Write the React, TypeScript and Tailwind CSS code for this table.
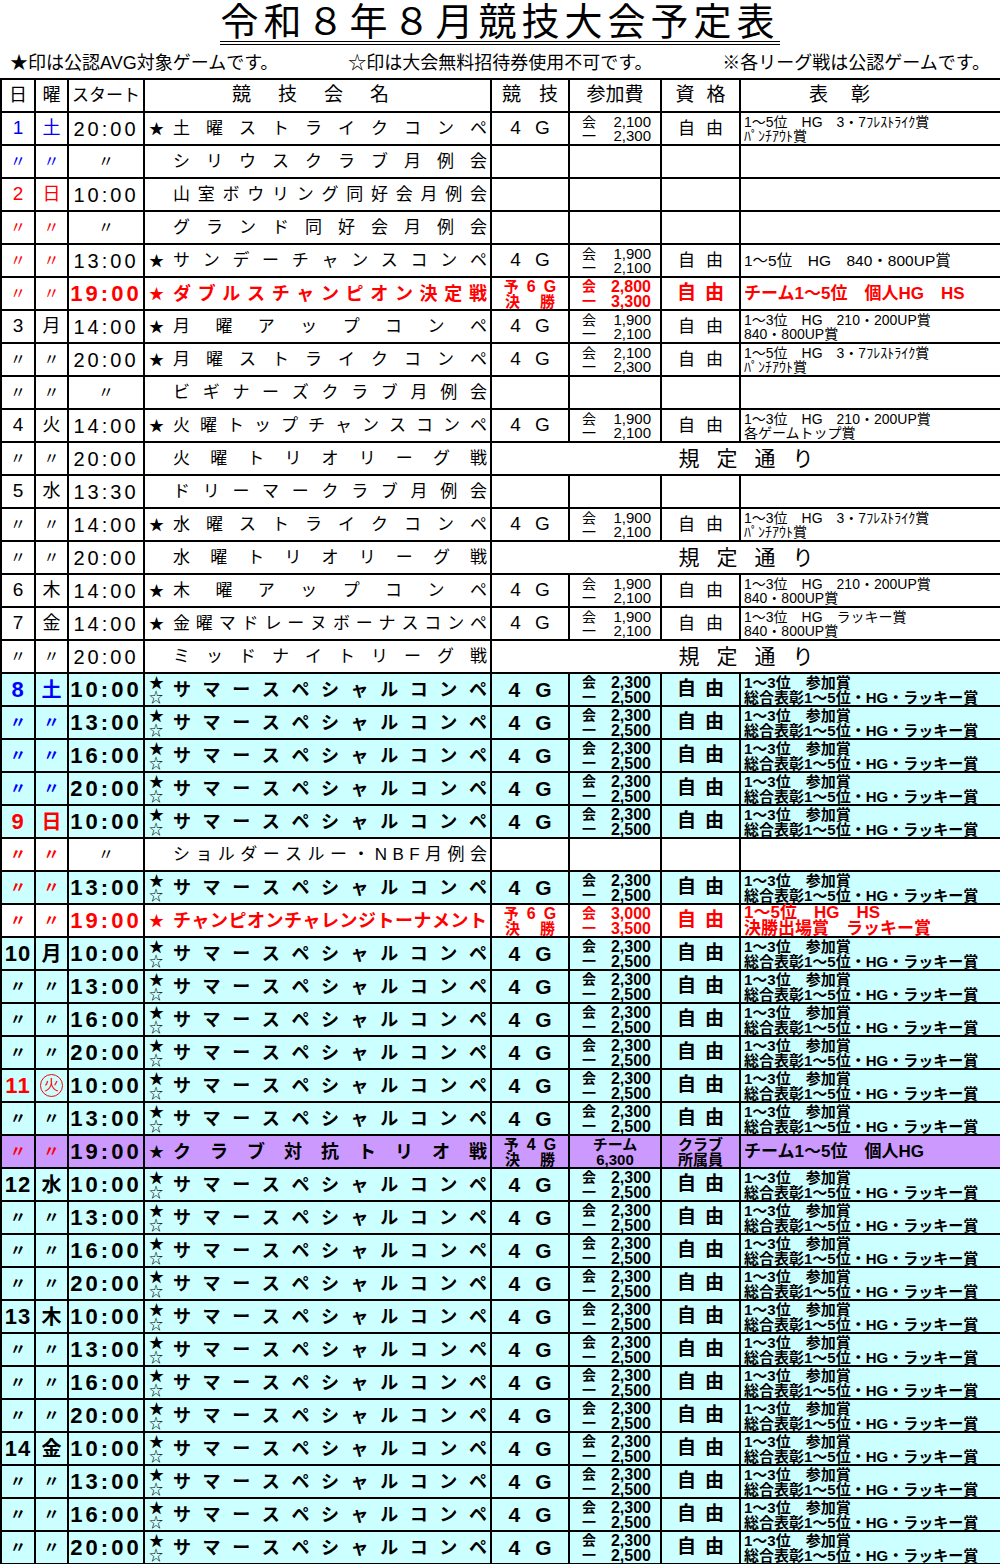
import React from 'react'

type Tone = 'k' | 'b' | 'r'
type Kind = 'plain' | 'summer' | 'double' | 'challenge' | 'club'

interface Row {
  day: string
  dow: string
  tone: Tone
  time: string
  name: string
  kind: Kind
  star?: boolean
  fee?: [string, string]
  award?: string[]
  rule?: boolean
  bold?: boolean
  holiday?: boolean
}

const D = '〃'
const RED = 'text-[#ff0000]'
const cell = 'border-2 border-black p-0 align-middle'

const toneText: Record<Tone, string> = {
  k: 'text-black',
  b: 'text-[#0000ff]',
  r: 'text-[#ff0000]',
}

const strike5 = ['1～5位　HG　3・7ﾌﾚｽﾄﾗｲｸ賞', 'ﾊﾟﾝﾁｱｳﾄ賞']
const strike3 = ['1～3位　HG　3・7ﾌﾚｽﾄﾗｲｸ賞', 'ﾊﾟﾝﾁｱｳﾄ賞']
const up3 = ['1～3位　HG　210・200UP賞', '840・800UP賞']

const sp = (day: string, dow: string, tone: Tone, time: string): Row => ({
  day, dow, tone, time, star: true, name: 'サマースペシャルコンペ', kind: 'summer', bold: true,
})

const rows: Row[] = [
  { day: '1', dow: '土', tone: 'b', time: '20:00', star: true, name: '土曜ストライクコンペ', kind: 'plain', fee: ['2,100', '2,300'], award: strike5 },
  { day: D, dow: D, tone: 'b', time: D, name: 'シリウスクラブ月例会', kind: 'plain' },
  { day: '2', dow: '日', tone: 'r', time: '10:00', name: '山室ボウリング同好会月例会', kind: 'plain' },
  { day: D, dow: D, tone: 'r', time: D, name: 'グランド同好会月例会', kind: 'plain' },
  { day: D, dow: D, tone: 'r', time: '13:00', star: true, name: 'サンデーチャンスコンペ', kind: 'plain', fee: ['1,900', '2,100'], award: ['1～5位　HG　840・800UP賞'] },
  { day: D, dow: D, tone: 'r', time: '19:00', star: true, name: 'ダブルスチャンピオン決定戦', kind: 'double' },
  { day: '3', dow: '月', tone: 'k', time: '14:00', star: true, name: '月曜アップコンペ', kind: 'plain', fee: ['1,900', '2,100'], award: up3 },
  { day: D, dow: D, tone: 'k', time: '20:00', star: true, name: '月曜ストライクコンペ', kind: 'plain', fee: ['2,100', '2,300'], award: strike5 },
  { day: D, dow: D, tone: 'k', time: D, name: 'ビギナーズクラブ月例会', kind: 'plain' },
  { day: '4', dow: '火', tone: 'k', time: '14:00', star: true, name: '火曜トップチャンスコンペ', kind: 'plain', fee: ['1,900', '2,100'], award: ['1～3位　HG　210・200UP賞', '各ゲームトップ賞'] },
  { day: D, dow: D, tone: 'k', time: '20:00', name: '火曜トリオリーグ戦', kind: 'plain', rule: true },
  { day: '5', dow: '水', tone: 'k', time: '13:30', name: 'ドリーマークラブ月例会', kind: 'plain' },
  { day: D, dow: D, tone: 'k', time: '14:00', star: true, name: '水曜ストライクコンペ', kind: 'plain', fee: ['1,900', '2,100'], award: strike3 },
  { day: D, dow: D, tone: 'k', time: '20:00', name: '水曜トリオリーグ戦', kind: 'plain', rule: true },
  { day: '6', dow: '木', tone: 'k', time: '14:00', star: true, name: '木曜アップコンペ', kind: 'plain', fee: ['1,900', '2,100'], award: up3 },
  { day: '7', dow: '金', tone: 'k', time: '14:00', star: true, name: '金曜マドレーヌボーナスコンペ', kind: 'plain', fee: ['1,900', '2,100'], award: ['1～3位　HG　ラッキー賞', '840・800UP賞'] },
  { day: D, dow: D, tone: 'k', time: '20:00', name: 'ミッドナイトリーグ戦', kind: 'plain', rule: true },
  sp('8', '土', 'b', '10:00'),
  sp(D, D, 'b', '13:00'),
  sp(D, D, 'b', '16:00'),
  sp(D, D, 'b', '20:00'),
  sp('9', '日', 'r', '10:00'),
  { day: D, dow: D, tone: 'r', time: D, name: 'ショルダースルー・NBF月例会', kind: 'plain', bold: true },
  sp(D, D, 'r', '13:00'),
  { day: D, dow: D, tone: 'r', time: '19:00', star: true, name: 'チャンピオンチャレンジトーナメント', kind: 'challenge', bold: true },
  sp('10', '月', 'k', '10:00'),
  sp(D, D, 'k', '13:00'),
  sp(D, D, 'k', '16:00'),
  sp(D, D, 'k', '20:00'),
  { ...sp('11', '火', 'r', '10:00'), holiday: true },
  sp(D, D, 'k', '13:00'),
  { day: D, dow: D, tone: 'r', time: '19:00', star: true, name: 'クラブ対抗トリオ戦', kind: 'club', bold: true },
  sp('12', '水', 'k', '10:00'),
  sp(D, D, 'k', '13:00'),
  sp(D, D, 'k', '16:00'),
  sp(D, D, 'k', '20:00'),
  sp('13', '木', 'k', '10:00'),
  sp(D, D, 'k', '13:00'),
  sp(D, D, 'k', '16:00'),
  sp(D, D, 'k', '20:00'),
  sp('14', '金', 'k', '10:00'),
  sp(D, D, 'k', '13:00'),
  sp(D, D, 'k', '16:00'),
  sp(D, D, 'k', '20:00'),
]

function Ditto() {
  return <span className="text-[16px]">〃</span>
}

function FourG({ bold }: { bold?: boolean }) {
  return (
    <div className={bold
      ? 'h-[31px] flex items-center justify-center gap-[15px] text-[21px] font-bold'
      : 'h-[31px] flex items-center justify-center gap-[14px] text-[19px]'}>
      <span>4</span>
      <span>G</span>
    </div>
  )
}

function Prelim({ n, red }: { n: string; red?: boolean }) {
  return (
    <div className={`h-[31px] flex flex-col items-center justify-center text-[15px] font-bold leading-[15px] ${red ? RED : ''}`}>
      <div className="flex items-baseline gap-[8px]"><span>予</span><span className="text-[16px]">{n}</span><span className="text-[16px]">G</span></div>
      <div className="flex gap-[20px]"><span>決</span><span>勝</span></div>
    </div>
  )
}

function Fee({ a, b, strong, red }: { a: string; b: string; strong?: boolean; red?: boolean }) {
  return (
    <div className={`h-[31px] flex flex-col justify-center pl-[12px] pr-[9px] ${strong ? 'text-[16px] font-bold leading-[15px]' : 'text-[15px] leading-[14px]'} ${red ? RED : ''}`}>
      <div className="flex items-center justify-between"><span className="text-[14px]">会</span><span>{a}</span></div>
      <div className="flex items-center justify-between"><span className="text-[14px]">一</span><span>{b}</span></div>
    </div>
  )
}

function Free({ bold, red }: { bold?: boolean; red?: boolean }) {
  return (
    <div className={`h-[31px] flex items-center justify-center ${bold ? 'gap-[9px] text-[19px] font-bold' : 'gap-[11px] text-[17px]'} ${red ? RED : ''}`}>
      <span>自</span>
      <span>由</span>
    </div>
  )
}

function Award({ lines, className }: { lines: string[]; className: string }) {
  return (
    <div className={`h-[31px] flex flex-col justify-center pl-[3px] whitespace-nowrap ${className}`}>
      {lines.map((l, i) => <div key={i}>{l}</div>)}
    </div>
  )
}

function Details({ r }: { r: Row }) {
  if (r.kind === 'summer') {
    return (
      <>
        <td className={cell}><FourG bold /></td>
        <td className={cell}><Fee a="2,300" b="2,500" strong /></td>
        <td className={cell}><Free bold /></td>
        <td className={cell}>
          <Award lines={['1～3位　参加賞', '総合表彰1～5位・HG・ラッキー賞']} className="text-[15px] font-bold leading-[15px]" />
        </td>
      </>
    )
  }
  if (r.kind === 'double') {
    return (
      <>
        <td className={cell}><Prelim n="6" red /></td>
        <td className={cell}><Fee a="2,800" b="3,300" strong red /></td>
        <td className={cell}><Free bold red /></td>
        <td className={cell}>
          <Award lines={['チーム1～5位　個人HG　HS']} className={`text-[17px] font-bold ${RED}`} />
        </td>
      </>
    )
  }
  if (r.kind === 'challenge') {
    return (
      <>
        <td className={cell}><Prelim n="6" red /></td>
        <td className={cell}><Fee a="3,000" b="3,500" strong red /></td>
        <td className={cell}><Free bold red /></td>
        <td className={cell}>
          <Award lines={['1～5位　HG　HS', '決勝出場賞　ラッキー賞']} className={`text-[17px] font-bold leading-[16px] ${RED}`} />
        </td>
      </>
    )
  }
  if (r.kind === 'club') {
    return (
      <>
        <td className={cell}><Prelim n="4" /></td>
        <td className={cell}>
          <div className="h-[31px] flex flex-col items-center justify-center text-[15px] font-bold leading-[15px]">
            <span>チーム</span>
            <span>6,300</span>
          </div>
        </td>
        <td className={cell}>
          <div className="h-[31px] flex flex-col items-center justify-center text-[15px] font-bold leading-[15px]">
            <span>クラブ</span>
            <span>所属員</span>
          </div>
        </td>
        <td className={cell}>
          <Award lines={['チーム1～5位　個人HG']} className="text-[17px] font-bold" />
        </td>
      </>
    )
  }
  if (r.rule) {
    return (
      <td className={cell} colSpan={4}>
        <div className="h-[31px] flex items-center justify-center gap-[17px] text-[21px]">
          <span>規</span><span>定</span><span>通</span><span>り</span>
        </div>
      </td>
    )
  }
  if (!r.fee) {
    return (
      <>
        <td className={cell} />
        <td className={cell} />
        <td className={cell} />
        <td className={cell} />
      </>
    )
  }
  const award = r.award ?? []
  return (
    <>
      <td className={cell}><FourG /></td>
      <td className={cell}><Fee a={r.fee[0]} b={r.fee[1]} /></td>
      <td className={cell}><Free /></td>
      <td className={cell}>
        {award.length > 1
          ? <Award lines={award} className="text-[14px] leading-[14px]" />
          : <Award lines={award} className="text-[15.5px]" />}
      </td>
    </>
  )
}

function NameCell({ r }: { r: Row }) {
  const summer = r.kind === 'summer'
  const look =
    r.kind === 'double' || r.kind === 'challenge'
      ? `${RED} font-bold text-[18px]`
      : summer || r.kind === 'club'
        ? 'font-bold text-[18px]'
        : 'text-[17px]'
  return (
    <td className={cell}>
      <div className={`h-[31px] flex items-center pl-[4px] pr-[3px] ${look}`}>
        <div className="w-[24px] shrink-0 flex flex-col leading-[14px]">
          {summer ? (
            <>
              <span className="text-[15px] font-normal">★</span>
              <span className="text-[14px] font-normal">☆</span>
            </>
          ) : r.star ? (
            <span className="text-[15px] font-normal">★</span>
          ) : null}
        </div>
        <div className="flex-1 flex justify-between leading-none">
          {Array.from(r.name).map((c, i) => <span key={i}>{c}</span>)}
        </div>
      </div>
    </td>
  )
}

function ScheduleRow({ r }: { r: Row }) {
  const bg = r.kind === 'summer' ? 'bg-[#ccffff]' : r.kind === 'club' ? 'bg-[#cc99ff]' : 'bg-white'
  const dayCls = r.bold ? 'text-[22px] font-bold tracking-[1px]' : 'text-[19px]'
  const dowCls = r.bold ? 'text-[20px] font-bold' : 'text-[18px]'
  const timeCls =
    r.kind === 'plain'
      ? 'text-[20px] tracking-[3px]'
      : r.kind === 'double' || r.kind === 'challenge'
        ? `text-[22px] font-bold tracking-[3px] ${RED}`
        : 'text-[22px] font-bold tracking-[3px]'
  return (
    <tr className={`h-[33px] ${bg}`}>
      <td className={cell}>
        <div className={`h-[31px] flex items-center justify-center ${toneText[r.tone]} ${r.bold ? 'font-bold' : ''}`}>
          {r.day === D ? <Ditto /> : <span className={dayCls}>{r.day}</span>}
        </div>
      </td>
      <td className={cell}>
        <div className={`h-[31px] flex items-center justify-center ${toneText[r.tone]} ${r.bold ? 'font-bold' : ''}`}>
          {r.dow === D ? (
            <Ditto />
          ) : r.holiday ? (
            <span className="w-[23px] h-[23px] rounded-full border border-[#ff0000] flex items-center justify-center text-[15px] font-normal">
              {r.dow}
            </span>
          ) : (
            <span className={dowCls}>{r.dow}</span>
          )}
        </div>
      </td>
      <td className={cell}>
        <div className="h-[31px] flex items-center justify-center">
          {r.time === D ? <Ditto /> : <span className={timeCls}>{r.time}</span>}
        </div>
      </td>
      <NameCell r={r} />
      <Details r={r} />
    </tr>
  )
}

export default function App() {
  return (
    <div className="w-[1000px] bg-white text-black font-['Liberation_Sans','Noto_Sans_CJK_JP',sans-serif]">
      {/* Title */}
      <div className="h-[48px] flex justify-center pt-[2px]">
        <h1 className="h-[43px] text-[38px] leading-[40px] tracking-[5px] border-b-4 border-double border-black">
          令和８年８月競技大会予定表
        </h1>
      </div>

      {/* Notes */}
      <div className="h-[30px] flex items-center justify-between pl-[10px] pr-[10px] text-[18px] leading-none">
        <span>★印は公認AVG対象ゲームです。</span>
        <span>☆印は大会無料招待券使用不可です。</span>
        <span>※各リーグ戦は公認ゲームです。</span>
      </div>

      <table className="w-[1000px] table-fixed border-collapse border-2 border-black">
        <colgroup>
          <col className="w-[34px]" />
          <col className="w-[33px]" />
          <col className="w-[76px]" />
          <col className="w-[347px]" />
          <col className="w-[78px]" />
          <col className="w-[92px]" />
          <col className="w-[79px]" />
          <col className="w-[261px]" />
        </colgroup>
        <tbody>
          <tr className="h-[33px]">
            <td className={cell}><div className="h-[31px] flex items-center justify-center text-[18px]">日</div></td>
            <td className={cell}><div className="h-[31px] flex items-center justify-center text-[18px]">曜</div></td>
            <td className={cell}><div className="h-[31px] flex items-center justify-center text-[17px]">スタート</div></td>
            <td className={cell}>
              <div className="h-[31px] flex items-center justify-center gap-[27px] text-[19px] pr-[14px]">
                <span>競</span><span>技</span><span>会</span><span>名</span>
              </div>
            </td>
            <td className={cell}>
              <div className="h-[31px] flex items-center justify-center gap-[18px] text-[19px]">
                <span>競</span><span>技</span>
              </div>
            </td>
            <td className={cell}><div className="h-[31px] flex items-center justify-center text-[19px]">参加費</div></td>
            <td className={cell}>
              <div className="h-[31px] flex items-center justify-center gap-[12px] text-[19px]">
                <span>資</span><span>格</span>
              </div>
            </td>
            <td className={cell}>
              <div className="h-[31px] flex items-center gap-[23px] pl-[68px] text-[19px]">
                <span>表</span><span>彰</span>
              </div>
            </td>
          </tr>
          {rows.map((r, i) => <ScheduleRow key={i} r={r} />)}
        </tbody>
      </table>
    </div>
  )
}
